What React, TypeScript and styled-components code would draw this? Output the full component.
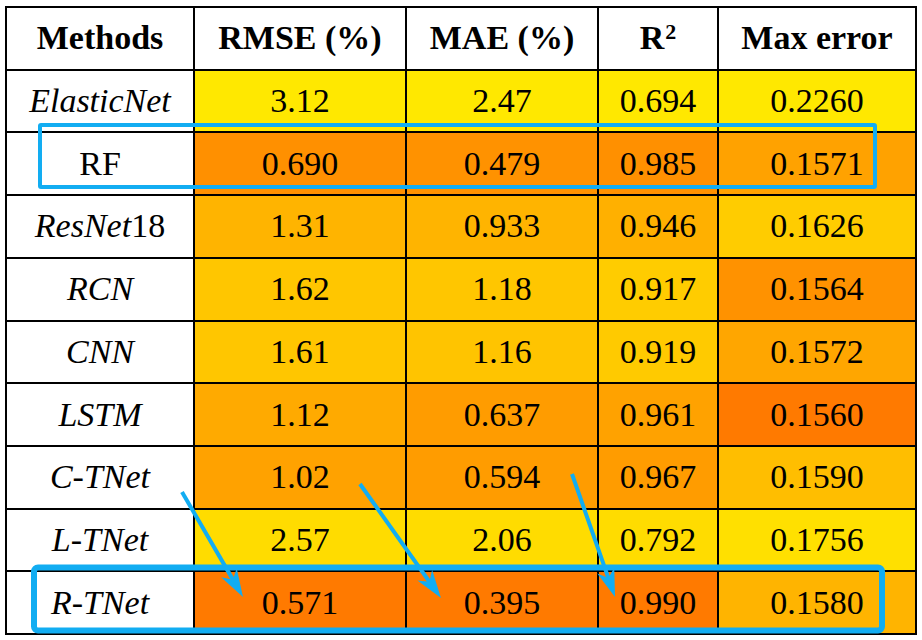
import styled, { createGlobalStyle } from "styled-components";

const serif = `"Liberation Serif", "Times New Roman", serif`;

const GlobalStyle = createGlobalStyle`
   body {
      margin: 0;
      background: #ffffff;
      font-family: ${serif};
   }
`;

const blue = "#12adf2";

const Page = styled.div`
   position: relative;
   width: 922px;
   height: 640px;
   padding: 6px 0 0 5px;
   box-sizing: border-box;
   background: #ffffff;
`;

const Table = styled.div`
   display: grid;
   grid-template-columns: 186px 210px 190px 118px 196px;
   grid-template-rows: repeat(10, 1fr);
   gap: 2px;
   padding: 2px;
   width: 912px;
   height: 629px;
   box-sizing: border-box;
   background: #000000;
`;

const Cell = styled.div<{ $bg?: string }>`
   display: flex;
   align-items: center;
   justify-content: center;
   background: ${(p) => p.$bg || "#ffffff"};
   color: #000000;
   font-family: ${serif};
   font-size: 34px;
   line-height: 1;
   white-space: nowrap;
`;

const HeaderCell = styled(Cell)`
   font-weight: bold;
`;

const MethodCell = styled(Cell)<{ $italic?: boolean }>`
   font-style: ${(p) => (p.$italic ? "italic" : "normal")};
`;

const Upright = styled.span`
   font-style: normal;
`;

const Sup = styled.sup`
   font-size: 22px;
   position: relative;
   top: -6px;
   vertical-align: top;
   margin-left: 1px;
`;

const Overlay = styled.svg`
   position: absolute;
   left: 0;
   top: 0;
   pointer-events: none;
`;

// green channel of the orange -> yellow heat scale, per cell
const g = (v: number) => `#ff${v.toString(16).padStart(2, "0")}00`;

type Row = {
   name: React.ReactNode;
   italic: boolean;
   cells: [string, number][];
};

const rows: Row[] = [
   { name: "ElasticNet", italic: true, cells: [["3.12", 0xe8], ["2.47", 0xe8], ["0.694", 0xe8], ["0.2260", 0xe8]] },
   { name: "RF", italic: false, cells: [["0.690", 0x90], ["0.479", 0x92], ["0.985", 0x90], ["0.1571", 0xa2]] },
   {
      name: (
         <>
            ResNet<Upright>18</Upright>
         </>
      ),
      italic: true,
      cells: [["1.31", 0xb4], ["0.933", 0xb4], ["0.946", 0xb0], ["0.1626", 0xcc]],
   },
   { name: "RCN", italic: true, cells: [["1.62", 0xc6], ["1.18", 0xc6], ["0.917", 0xcc], ["0.1564", 0x92]] },
   { name: "CNN", italic: true, cells: [["1.61", 0xc6], ["1.16", 0xc4], ["0.919", 0xca], ["0.1572", 0xa6]] },
   { name: "LSTM", italic: true, cells: [["1.12", 0xaa], ["0.637", 0x9c], ["0.961", 0xa2], ["0.1560", 0x7a]] },
   { name: "C-TNet", italic: true, cells: [["1.02", 0xa2], ["0.594", 0x9c], ["0.967", 0x9c], ["0.1590", 0xbe]] },
   { name: "L-TNet", italic: true, cells: [["2.57", 0xdc], ["2.06", 0xdc], ["0.792", 0xdc], ["0.1756", 0xe0]] },
   { name: "R-TNet", italic: true, cells: [["0.571", 0x7a], ["0.395", 0x7a], ["0.990", 0x7a], ["0.1580", 0xb4]] },
];

const arrows = [
   { x1: 182, y1: 492, x2: 243, y2: 597 },
   { x1: 360, y1: 484, x2: 441, y2: 598 },
   { x1: 572, y1: 474, x2: 615, y2: 597 },
];

const Arrow: React.FC<{ x1: number; y1: number; x2: number; y2: number }> = ({ x1, y1, x2, y2 }) => {
   const len = Math.hypot(x2 - x1, y2 - y1);
   const ux = (x2 - x1) / len;
   const uy = (y2 - y1) / len;
   return (
      <line
         x1={x1}
         y1={y1}
         x2={x2 - ux * 12}
         y2={y2 - uy * 12}
         stroke={blue}
         strokeWidth={4}
         markerEnd="url(#head)"
      />
   );
};

const App: React.FC = () => {
   return (
      <>
         <GlobalStyle />
         <Page>
            <Table>
               <HeaderCell>Methods</HeaderCell>
               <HeaderCell>RMSE (%)</HeaderCell>
               <HeaderCell>MAE (%)</HeaderCell>
               <HeaderCell>
                  R<Sup>2</Sup>
               </HeaderCell>
               <HeaderCell>Max error</HeaderCell>
               {rows.map((row, i) => [
                  <MethodCell key={`m${i}`} $italic={row.italic}>
                     {row.name}
                  </MethodCell>,
                  ...row.cells.map(([value, green], j) => (
                     <Cell key={`c${i}-${j}`} $bg={g(green)}>
                        {value}
                     </Cell>
                  )),
               ])}
            </Table>
            <Overlay width={922} height={640} viewBox="0 0 922 640">
               <defs>
                  <marker
                     id="head"
                     markerUnits="userSpaceOnUse"
                     markerWidth={28}
                     markerHeight={20}
                     viewBox="0 0 28 20"
                     refX={16}
                     refY={10}
                     orient="auto"
                  >
                     <path d="M0,1 L28,10 L0,19 L8,10 Z" fill={blue} />
                  </marker>
               </defs>
               <rect x={40} y={125} width={835} height={62} fill="none" stroke={blue} strokeWidth={4} rx={1} />
               <rect x={34} y={567.5} width={848} height={63} fill="none" stroke={blue} strokeWidth={6} rx={4} />
               {arrows.map((a, i) => (
                  <Arrow key={i} {...a} />
               ))}
            </Overlay>
         </Page>
      </>
   );
};

export default App;
